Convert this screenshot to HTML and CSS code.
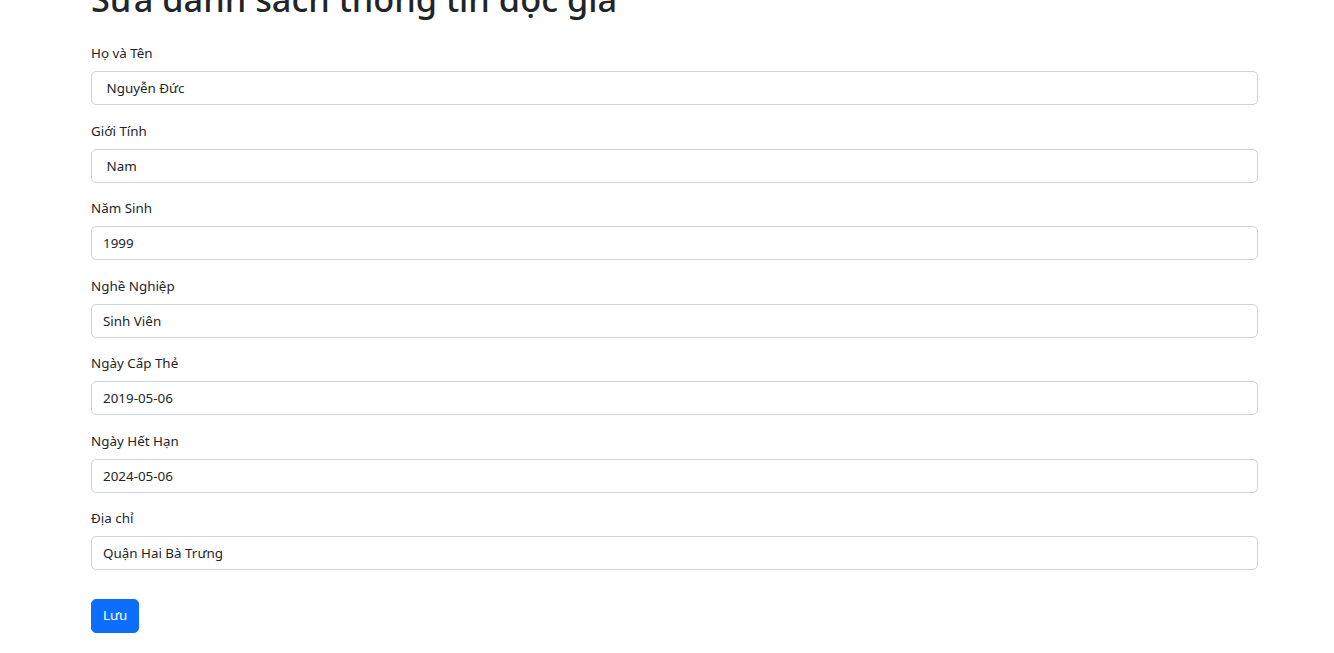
FILE: index.html
```html
<!DOCTYPE html>
<html lang="vi">
<head>
<meta charset="utf-8">
<title>Sửa danh sách thông tin độc giả</title>
<link rel="stylesheet" href="styles.css">
</head>
<body>
<main class="container">
  <h1 class="title">Sửa danh sách thông tin độc giả</h1>
  <form class="form">
    <div class="group">
      <label class="label">Họ và Tên</label>
      <input class="control" type="text" value=" Nguyễn Đức">
    </div>
    <div class="group">
      <label class="label">Giới Tính</label>
      <input class="control" type="text" value=" Nam">
    </div>
    <div class="group">
      <label class="label">Năm Sinh</label>
      <input class="control" type="text" value="1999">
    </div>
    <div class="group">
      <label class="label">Nghề Nghiệp</label>
      <input class="control" type="text" value="Sinh Viên">
    </div>
    <div class="group">
      <label class="label">Ngày Cấp Thẻ</label>
      <input class="control" type="text" value="2019-05-06">
    </div>
    <div class="group">
      <label class="label">Ngày Hết Hạn</label>
      <input class="control" type="text" value="2024-05-06">
    </div>
    <div class="group">
      <label class="label">Địa chỉ</label>
      <input class="control" type="text" value="Quận Hai Bà Trưng">
    </div>
    <button class="btn" type="button">Lưu</button>
  </form>
</main>
</body>
</html>
```
FILE: styles.css
```css
* { box-sizing: border-box; }
html, body {
  margin: 0;
  padding: 0;
  background: #fff;
  overflow: hidden;
}
body {
  font-family: "Noto Sans", "Open Sans", sans-serif;
  font-size: 14px;
  line-height: 1.5;
  color: #212529;
}
.container {
  width: 1167px;
  margin-left: 91px;
}
.title {
  font-size: 34.3px;
  font-weight: 500;
  line-height: 42px;
  margin: -22px 0 23px 0;
  color: #212529;
  white-space: nowrap;
}
.form {
  display: flex;
  flex-direction: column;
}
.group {
  display: flex;
  flex-direction: column;
  margin-bottom: 15.5px;
}
.label {
  font-size: 13.4px;
  line-height: 21px;
  margin-bottom: 7px;
}
.control {
  display: block;
  width: 100%;
  height: 34px;
  padding: 5px 11px;
  font-family: inherit;
  font-size: 13.4px;
  line-height: 21px;
  color: #212529;
  background: #fff;
  border: 1px solid #ced4da;
  border-radius: 5px;
  white-space: pre;
}
.btn {
  align-self: flex-start;
  margin-top: 13px;
  height: 34px;
  padding: 5px 11px;
  font-family: inherit;
  font-size: 13.4px;
  line-height: 21px;
  color: #fff;
  background: #0d6efd;
  border: 1px solid #0d6efd;
  border-radius: 5px;
}
```
